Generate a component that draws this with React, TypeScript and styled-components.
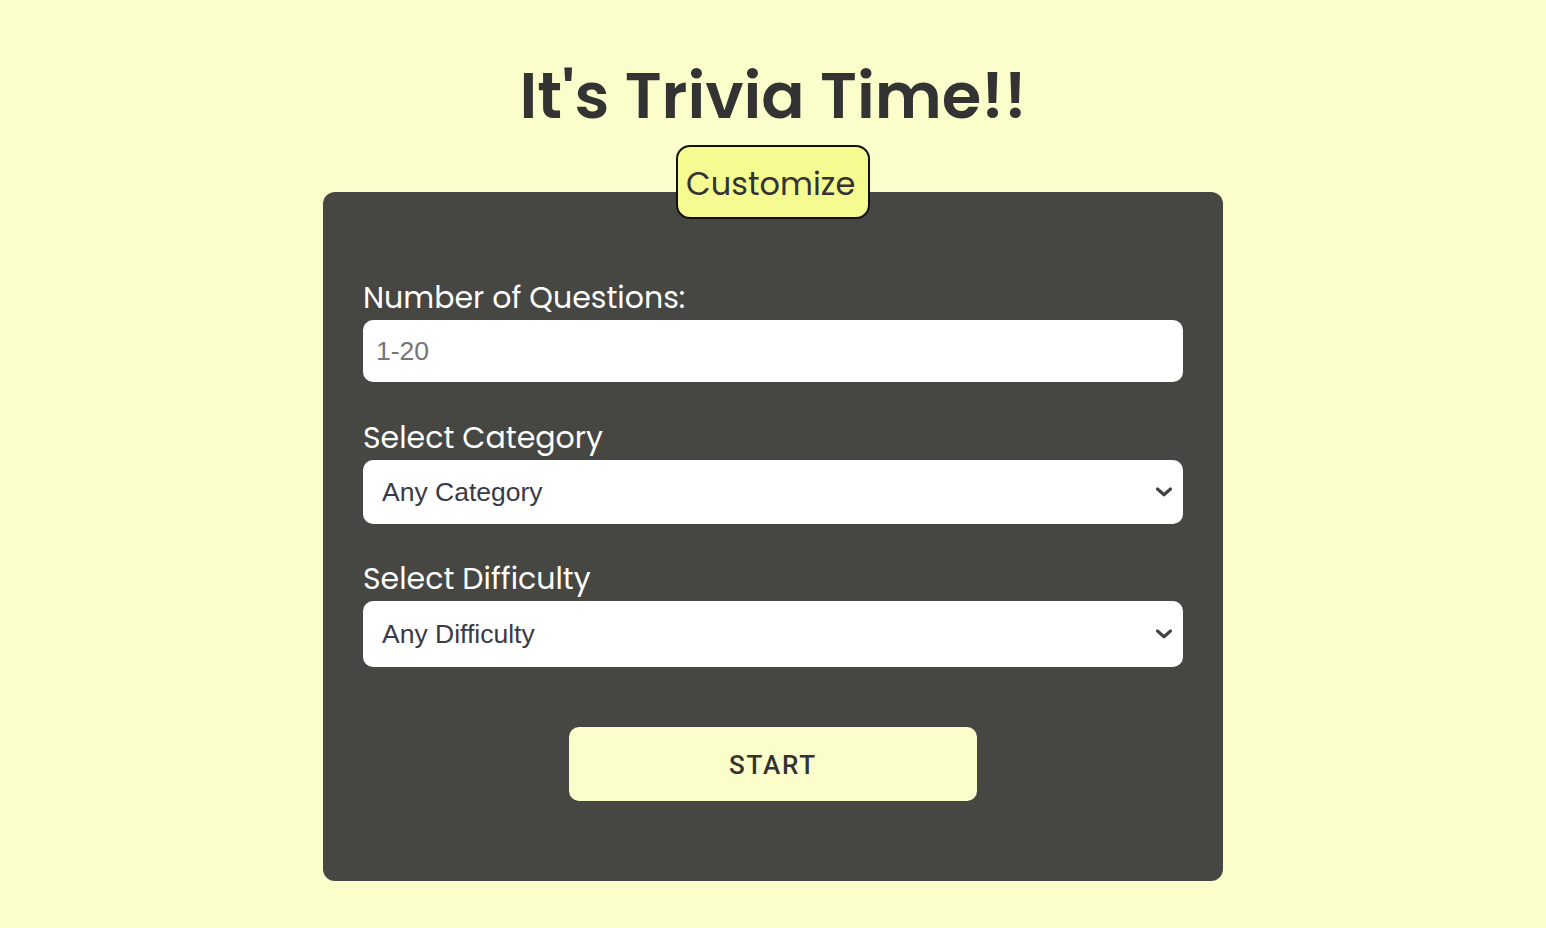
import React from "react";
import styled, { createGlobalStyle } from "styled-components";

const Global = createGlobalStyle`
  html, body { margin: 0; padding: 0; background: #fbfdcb; }
  body { font-family: "Poppins", "Noto Sans", "Open Sans", sans-serif; color: #333; }
  * { box-sizing: border-box; }
`;

const Page = styled.main`
  min-height: 928px;
  display: flex;
  flex-direction: column;
  align-items: center;
  padding-top: 52px;
`;

const Title = styled.h1`
  margin: 0;
  font-family: "Poppins", "Noto Sans", sans-serif;
  font-weight: 600;
  font-size: 64px;
  line-height: 88px;
  color: #333;
`;

const Card = styled.form`
  position: relative;
  margin-top: 52px;
  width: 900px;
  height: 689px;
  background: #464642;
  border-radius: 12px;
  padding: 83px 40px 0;
  display: flex;
  flex-direction: column;
`;

const Badge = styled.div`
  position: absolute;
  top: -47px;
  left: 353px;
  width: 194px;
  height: 74px;
  background: #f6fb91;
  border: 2px solid #111;
  border-radius: 14px;
  display: flex;
  align-items: center;
  padding: 4px 0 0 8px;
  font-size: 32px;
  color: #333;
`;

const Field = styled.div<{ $gap: number }>`
  display: flex;
  flex-direction: column;
  margin-bottom: ${(p) => p.$gap}px;
`;

const Label = styled.label`
  color: #fff;
  font-size: 30px;
  line-height: 45px;
`;

const Input = styled.input`
  width: 820px;
  height: 62px;
  border: none;
  border-radius: 10px;
  background: #fff;
  padding: 0 13px;
  font-family: "Liberation Sans", Arial, sans-serif;
  font-size: 26.5px;
  color: #3a3a48;
  outline: none;
  &::placeholder { color: #757575; }
`;

const SelectWrap = styled.div<{ $h: number }>`
  position: relative;
  width: 820px;
  height: ${(p) => p.$h}px;
`;

const Select = styled.select`
  appearance: none;
  -webkit-appearance: none;
  width: 100%;
  height: 100%;
  border: none;
  border-radius: 10px;
  background: #fff;
  padding: 0 48px 0 19px;
  font-family: "Liberation Sans", Arial, sans-serif;
  font-size: 26.5px;
  color: #3a3a48;
  outline: none;
`;

const Chevron = styled.svg`
  position: absolute;
  right: 9px;
  top: 50%;
  width: 20px;
  height: 12px;
  transform: translateY(-50%);
  pointer-events: none;
`;

const StartButton = styled.button`
  align-self: center;
  margin-top: 60px;
  width: 408px;
  height: 74px;
  border: none;
  border-radius: 10px;
  background: #fbfdcb;
  font-family: Roboto, "Liberation Sans", sans-serif;
  font-weight: 500;
  font-size: 26px;
  letter-spacing: 1.8px;
  color: #333;
  padding-top: 2px;
  cursor: pointer;
`;

const Arrow = () => (
  <Chevron viewBox="0 0 20 12" aria-hidden="true">
    <path d="M3.5 3 L10 8.8 L16.5 3" fill="none" stroke="#444" strokeWidth="3.2" strokeLinecap="round" strokeLinejoin="round" />
  </Chevron>
);

export default function App() {
  return (
    <>
      <Global />
      <Page>
        <Title>It's Trivia Time!!</Title>
        <Card onSubmit={(e) => e.preventDefault()}>
          <Badge>Customize</Badge>
          <Field $gap={33}>
            <Label htmlFor="num">Number of Questions:</Label>
            <Input id="num" type="number" placeholder="1-20" />
          </Field>
          <Field $gap={32}>
            <Label htmlFor="cat">Select Category</Label>
            <SelectWrap $h={64}>
              <Select id="cat" defaultValue="any">
                <option value="any">Any Category</option>
                <option value="9">General Knowledge</option>
              </Select>
              <Arrow />
            </SelectWrap>
          </Field>
          <Field $gap={0}>
            <Label htmlFor="diff">Select Difficulty</Label>
            <SelectWrap $h={66}>
              <Select id="diff" defaultValue="any">
                <option value="any">Any Difficulty</option>
                <option value="easy">Easy</option>
                <option value="medium">Medium</option>
                <option value="hard">Hard</option>
              </Select>
              <Arrow />
            </SelectWrap>
          </Field>
          <StartButton type="submit">START</StartButton>
        </Card>
      </Page>
    </>
  );
}
